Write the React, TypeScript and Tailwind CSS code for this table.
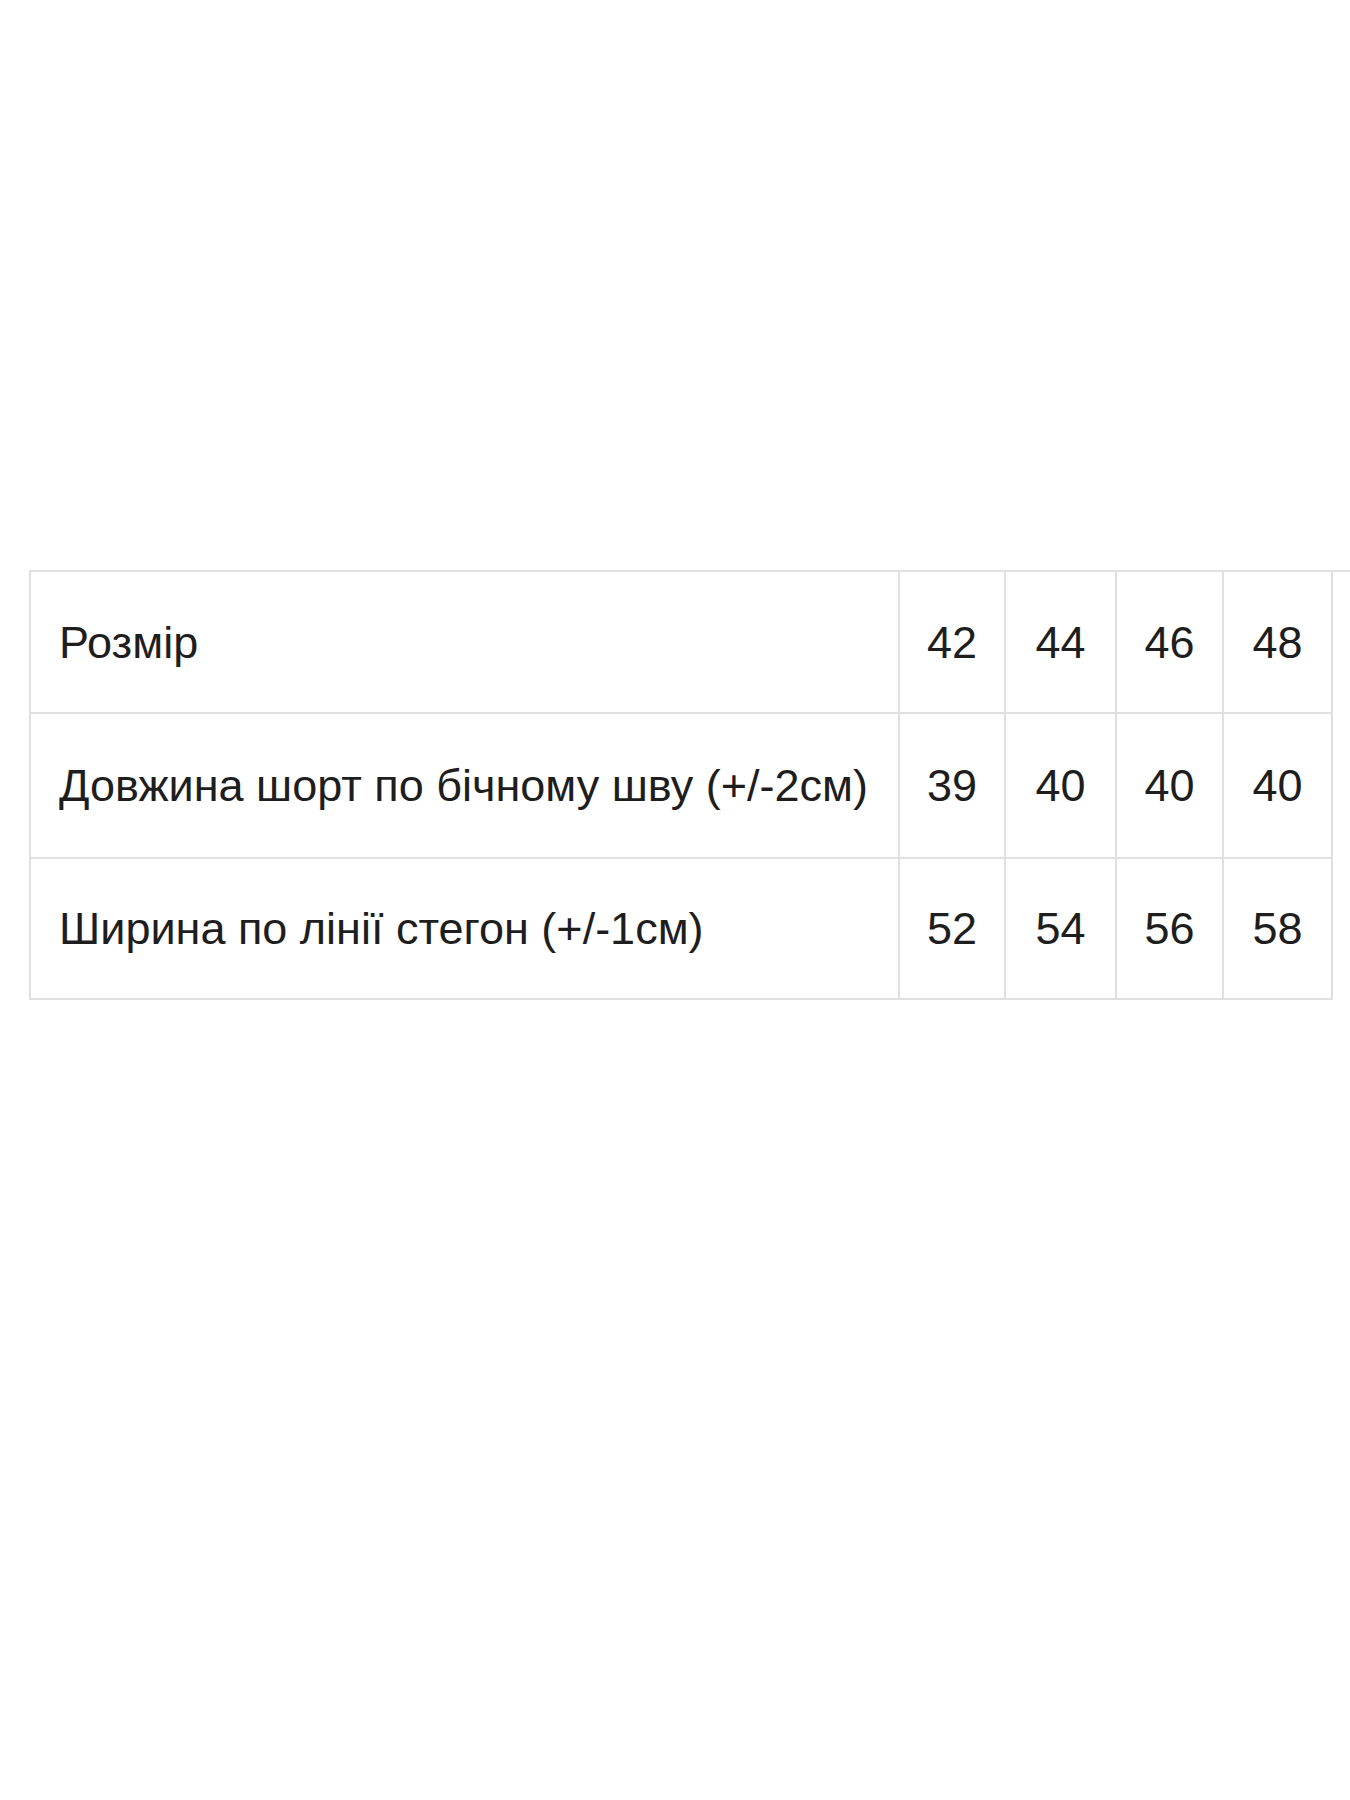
const rows = [
	{ label: "Розмір", values: ["42", "44", "46", "48"], height: "h-[142px]" },
	{ label: "Довжина шорт по бічному шву (+/-2см)", values: ["39", "40", "40", "40"], height: "h-[145px]" },
	{ label: "Ширина по лінії стегон (+/-1см)", values: ["52", "54", "56", "58"], height: "h-[141px]" },
];

const App = () => {
	return (
		<div className="min-h-[1800px] w-full bg-white pt-[570px] pl-[29px] font-['Liberation_Sans',Arial,sans-serif] text-[#1e1e1e]">
			<div className="flex items-start">
				<table className="table-fixed border-collapse w-[1304px] text-[45px] leading-none">
					<colgroup>
						<col className="w-[869px]" />
						<col className="w-[106px]" />
						<col className="w-[111px]" />
						<col className="w-[107px]" />
						<col className="w-[109px]" />
					</colgroup>
					<tbody>
						{rows.map((row) => (
							<tr key={row.label} className={row.height}>
								<td className="border-2 border-[#e0e0e0] pl-[28px] align-middle whitespace-nowrap">
									{row.label}
								</td>
								{row.values.map((v, i) => (
									<td key={i} className="border-2 border-[#e0e0e0] text-center align-middle">
										{v}
									</td>
								))}
							</tr>
						))}
					</tbody>
				</table>
				<div className="w-[20px] border-t-2 border-[#e0e0e0]" />
			</div>
		</div>
	);
};

export default App;
